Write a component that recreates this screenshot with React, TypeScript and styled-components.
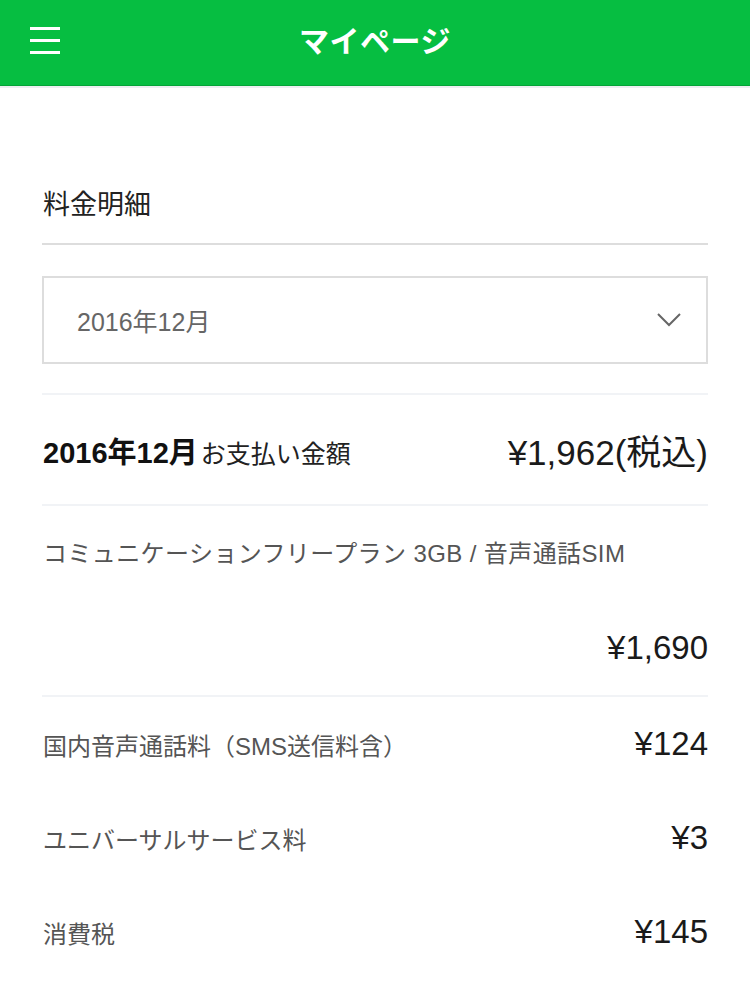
import React from "react"
import styled, { createGlobalStyle } from "styled-components"

const GlobalStyle = createGlobalStyle`
    html, body {
        margin: 0;
        padding: 0;
        background: #fff;
    }
    body {
        font-family: "Liberation Sans", "Noto Sans CJK JP", sans-serif;
        color: #222;
    }
`

const Header = styled.header`
    position: relative;
    height: 85px;
    background-color: #06be41;
    border-bottom: 1px solid #04a437;
    box-shadow: 0 2px 0 #eceff1;
    display: flex;
    align-items: center;
    justify-content: center;
`

const MenuButton = styled.button`
    position: absolute;
    left: 30px;
    top: 27px;
    width: 30px;
    height: 27px;
    padding: 0;
    border: none;
    background: none;
    display: flex;
    flex-direction: column;
    justify-content: space-between;

    span {
        display: block;
        height: 3px;
        background: #fff;
    }
`

const Title = styled.h1`
    margin: 0;
    margin-top: -7px;
    color: #fff;
    font-size: 30px;
    font-weight: bold;
    letter-spacing: 0.5px;
`

const Main = styled.main`
    padding: 0 42px;
`

const SectionTitle = styled.h2`
    margin: 0;
    padding: 101px 0 20px 1px;
    font-size: 27px;
    line-height: 36px;
    font-weight: normal;
    color: #222;
    border-bottom: 2px solid #dddddd;
`

const Select = styled.div`
    margin-top: 31px;
    height: 84px;
    border: 2px solid #dddddd;
    display: flex;
    align-items: center;
    justify-content: space-between;
    padding: 0 24px 0 33px;
    color: #666;
    font-size: 25px;
`

const Rule = styled.div<{ $gap?: number }>`
    height: 2px;
    margin-top: ${({ $gap }) => $gap ?? 0}px;
    background: #f1f3f6;
`

const TotalRow = styled.div`
    height: 109px;
    display: flex;
    align-items: center;
    justify-content: space-between;
    padding-left: 1px;
`

const TotalLabel = styled.div`
    font-size: 25px;
    color: #222;

    strong {
        font-size: 29px;
        font-weight: bold;
        color: #111;
        margin-right: 3px;
    }
`

const Amount = styled.div<{ $size?: number }>`
    font-size: ${({ $size }) => $size ?? 33}px;
    color: #1a1a1a;
    text-align: right;
`

const PlanBlock = styled.div`
    padding: 28px 0 27px 1px;
`

const PlanName = styled.div`
    font-size: 24px;
    line-height: 40px;
    color: #555;
    letter-spacing: 0.4px;
`

const PlanPrice = styled(Amount)`
    margin-top: 54px;
    line-height: 40px;
`

const ItemRow = styled.div`
    height: 94px;
    display: flex;
    align-items: center;
    justify-content: space-between;
    padding-left: 1px;
`

const ItemLabel = styled.div`
    font-size: 24px;
    color: #555;
`

const Chevron = () => (
    <svg width="26" height="16" viewBox="0 0 26 16">
        <path d="M2 2 L13 13 L24 2" fill="none" stroke="#666" strokeWidth="2" />
    </svg>
)

const items = [
    { label: "国内音声通話料（SMS送信料含）", price: "¥124" },
    { label: "ユニバーサルサービス料", price: "¥3" },
    { label: "消費税", price: "¥145" },
]

const App = () => {
    return (
        <>
            <GlobalStyle />
            <Header>
                <MenuButton aria-label="menu">
                    <span />
                    <span />
                    <span />
                </MenuButton>
                <Title>マイページ</Title>
            </Header>

            <Main>
                <SectionTitle>料金明細</SectionTitle>

                <Select>
                    <span>2016年12月</span>
                    <Chevron />
                </Select>

                <Rule $gap={29} />

                <TotalRow>
                    <TotalLabel>
                        <strong>2016年12月</strong>お支払い金額
                    </TotalLabel>
                    <Amount $size={35}>¥1,962(税込)</Amount>
                </TotalRow>

                <Rule />

                <PlanBlock>
                    <PlanName>コミュニケーションフリープラン 3GB / 音声通話SIM</PlanName>
                    <PlanPrice>¥1,690</PlanPrice>
                </PlanBlock>

                <Rule />

                {items.map((item) => (
                    <ItemRow key={item.label}>
                        <ItemLabel>{item.label}</ItemLabel>
                        <Amount>{item.price}</Amount>
                    </ItemRow>
                ))}
            </Main>
        </>
    )
}

export default App
